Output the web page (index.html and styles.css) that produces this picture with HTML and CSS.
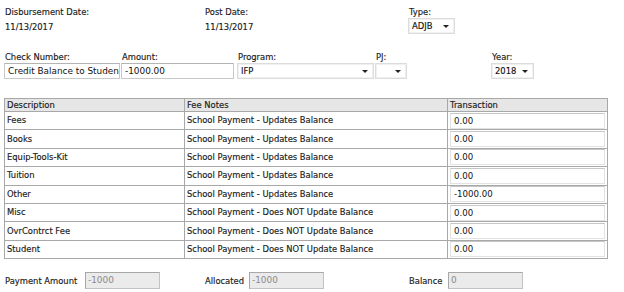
FILE: index.html
```html
<!DOCTYPE html>
<html lang="en">
<head>
  <meta charset="UTF-8">
  <title>Disbursement</title>
  <link rel="stylesheet" href="styles.css">
</head>
<body>
  <main class="page">
    <div class="row row-top">
      <div class="field col-disb">
        <div class="lbl">Disbursement Date:</div>
        <div class="val">11/13/2017</div>
      </div>
      <div class="field col-post">
        <div class="lbl">Post Date:</div>
        <div class="val">11/13/2017</div>
      </div>
      <div class="field col-type">
        <div class="lbl">Type:</div>
        <div class="select w-type">ADJB<span class="caret"></span></div>
      </div>
    </div>

    <div class="row row-check">
      <div class="field col-check">
        <div class="lbl">Check Number:</div>
        <div class="input">Credit Balance to Student</div>
      </div>
      <div class="field col-amount">
        <div class="lbl">Amount:</div>
        <div class="input">-1000.00</div>
      </div>
      <div class="field col-program">
        <div class="lbl">Program:</div>
        <div class="select">IFP<span class="caret"></span></div>
      </div>
      <div class="field col-pj">
        <div class="lbl">PJ:</div>
        <div class="select"><span class="caret"></span></div>
      </div>
      <div class="field col-year">
        <div class="lbl">Year:</div>
        <div class="select">2018<span class="caret"></span></div>
      </div>
    </div>

    <table class="fees">
      <thead>
        <tr>
          <th class="c-desc">Description</th>
          <th class="c-notes">Fee Notes</th>
          <th class="c-trans">Transaction</th>
        </tr>
      </thead>
      <tbody>
        <tr><td>Fees</td><td>School Payment - Updates Balance</td><td class="t-in"><div class="cell-input">0.00</div></td></tr>
        <tr><td>Books</td><td>School Payment - Updates Balance</td><td class="t-in"><div class="cell-input">0.00</div></td></tr>
        <tr><td>Equip-Tools-Kit</td><td>School Payment - Updates Balance</td><td class="t-in"><div class="cell-input">0.00</div></td></tr>
        <tr><td>Tuition</td><td>School Payment - Updates Balance</td><td class="t-in"><div class="cell-input">0.00</div></td></tr>
        <tr><td>Other</td><td>School Payment - Updates Balance</td><td class="t-in"><div class="cell-input">-1000.00</div></td></tr>
        <tr><td>Misc</td><td>School Payment - Does NOT Update Balance</td><td class="t-in"><div class="cell-input">0.00</div></td></tr>
        <tr><td>OvrContrct Fee</td><td>School Payment - Does NOT Update Balance</td><td class="t-in"><div class="cell-input">0.00</div></td></tr>
        <tr><td>Student</td><td>School Payment - Does NOT Update Balance</td><td class="t-in"><div class="cell-input">0.00</div></td></tr>
      </tbody>
    </table>

    <div class="row row-totals">
      <div class="total col-pay">
        <span class="lbl">Payment Amount</span>
        <div class="input disabled">-1000</div>
      </div>
      <div class="total col-alloc">
        <span class="lbl">Allocated</span>
        <div class="input disabled">-1000</div>
      </div>
      <div class="total col-bal">
        <span class="lbl">Balance</span>
        <div class="input disabled">0</div>
      </div>
    </div>
  </main>
</body>
</html>
```

FILE: styles.css
```css
body {
  margin: 0;
  background: #fff;
  color: #1a1a1a;
  font-family: "DejaVu Sans", Verdana, sans-serif;
  font-size: 8.4px;
  -webkit-text-stroke: 0.15px;
}
.page {
  padding: 7px 0 0 4px;
}
.row {
  display: flex;
}
.field {
  display: flex;
  flex-direction: column;
}
.lbl {
  padding-left: 1px;
  line-height: 10px;
  white-space: nowrap;
}
.val {
  padding-left: 1px;
  margin-top: 5px;
  line-height: 10px;
}

/* top row */
.col-disb { width: 200px; }
.col-post { width: 204px; }
.row-top .select { margin-top: 1px; }
.w-type { width: 47px; }

/* check row */
.row-check {
  margin-top: 18px;
}
.row-check .lbl { margin-bottom: 1px; }
.col-check { width: 116px; margin-right: 1px; }
.col-amount { width: 113px; margin-right: 3px; }
.col-program { width: 137px; margin-right: 1px; }
.col-pj { width: 32px; margin-right: 84px; }
.col-year { width: 43px; }

.input, .select {
  box-sizing: border-box;
  height: 16px;
  border: 1px solid #c8c8c8;
  border-top-color: #b4b4b4;
  background: #fff;
  padding: 0 3px;
  font-size: 8.9px;
  line-height: 14px;
  white-space: nowrap;
  overflow: hidden;
  color: #111;
  -webkit-text-stroke: 0;
}
.select {
  position: relative;
  border-color: #dcdcdc;
  box-shadow: 0 0 0 1px #f0f0f0 inset;
  font-size: 8.4px;
  -webkit-text-stroke: 0.15px;
}
.caret {
  position: absolute;
  right: 5px;
  top: 6px;
  border-left: 3px solid transparent;
  border-right: 3px solid transparent;
  border-top: 3px solid #222;
}

/* fee table */
.fees {
  margin-top: 19px;
  width: 604px;
  border-collapse: collapse;
  border: 1px solid #8c8c8c;
}
.fees th, .fees td {
  border: 1px solid #a8a8a8;
  padding: 0 0 0 2px;
  text-align: left;
  font-weight: normal;
  white-space: nowrap;
  line-height: 11px;
}
.fees th {
  background: #e6e6e6;
  height: 12px;
}
.fees td {
  height: 17.4px;
}
.c-desc { width: 177px; }
.c-notes { width: 260px; }
.fees td.t-in {
  padding: 0 2px;
}
.cell-input {
  box-sizing: border-box;
  height: 16px;
  border: 1px solid #e2e2e2;
  border-top-color: #c6c6c6;
  padding: 0 3px;
  line-height: 14px;
  font-size: 8.6px;
  color: #111;
  -webkit-text-stroke: 0;
}

/* totals */
.row-totals {
  margin-top: 13px;
  align-items: center;
}
.total {
  display: flex;
  align-items: center;
}
.total .lbl { padding-right: 4px; }
.col-pay { width: 200px; }
.col-pay .lbl { width: 76px; }
.col-alloc { width: 204px; }
.col-alloc .lbl { width: 40px; }
.col-bal .lbl { width: 35px; }
.input.disabled {
  width: 75px;
  height: 17px;
  background: #ebebeb;
  border-color: #c2c2c2;
  border-left-color: #a8a8a8;
  border-top-color: #a8a8a8;
  color: #8a8a8a;
  padding-left: 2px;
  line-height: 15px;
}
```
